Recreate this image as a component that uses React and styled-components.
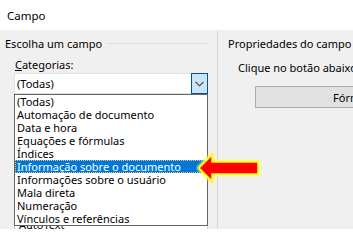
import React from 'react'
import styled, { createGlobalStyle } from 'styled-components'

const categories = [
    '(Todas)',
    'Automação de documento',
    'Data e hora',
    'Equações e fórmulas',
    'Índices',
    'Informação sobre o documento',
    'Informações sobre o usuário',
    'Mala direta',
    'Numeração',
    'Vínculos e referências',
]

// only the rows of the field list that peek out under the open dropdown
const fieldNames = ['AutoText', 'AutoTextList']

const SELECTED = 5

function App() {
    return (
        <>
            <GlobalStyle />
            <Dialog>
                <TitleBar>Campo</TitleBar>
                <Body>
                    <LeftPane>
                        <GroupHeader>
                            <span>Escolha um campo</span>
                            <Rule />
                        </GroupHeader>
                        <Label><u>C</u>ategorias:</Label>
                        <ComboWrap>
                            <Combo>
                                <span>(Todas)</span>
                                <DropButton>
                                    <svg width="9" height="6" viewBox="0 0 9 6">
                                        <path d="M0.5 0.8 L4.5 4.8 L8.5 0.8" fill="none" stroke="#404040" strokeWidth="1.1" />
                                    </svg>
                                </DropButton>
                            </Combo>
                            <DropList>
                                {categories.map((c, i) => (
                                    <Option key={c} $selected={i === SELECTED}>{c}</Option>
                                ))}
                            </DropList>
                        </ComboWrap>
                        <FieldList>
                            {fieldNames.map((f) => (
                                <FieldRow key={f}>{f}</FieldRow>
                            ))}
                        </FieldList>
                    </LeftPane>
                    <Divider />
                    <RightPane>
                        <GroupHeader>
                            <span>Propriedades do campo</span>
                        </GroupHeader>
                        <Hint>Clique no botão abaixo para definir opções avançadas do campo</Hint>
                        <FormulaButton>Fórmula...</FormulaButton>
                    </RightPane>
                </Body>
                <Arrow width="68" height="34" viewBox="0 0 68 34">
                    <defs>
                        <filter id="glow" x="-20%" y="-30%" width="140%" height="160%">
                            <feGaussianBlur stdDeviation="1" />
                        </filter>
                    </defs>
                    <path d="M3 17 L16 4 L16 11 L62 11 L62 23 L16 23 L16 30 Z"
                        fill="none" stroke="#ffff60" strokeWidth="4" filter="url(#glow)" strokeLinejoin="round" />
                    <path d="M3 17 L16 4 L16 11 L62 11 L62 23 L16 23 L16 30 Z"
                        fill="#ff0000" stroke="#ffff00" strokeWidth="1.6" strokeLinejoin="miter" />
                </Arrow>
            </Dialog>
        </>
    )
}

export default App

const GlobalStyle = createGlobalStyle`
    html, body {
        margin: 0;
        padding: 0;
        background: #ffffff;
    }
    body {
        font-family: "Noto Sans", "Open Sans", sans-serif;
        font-size: 11px;
        color: #000000;
    }
`

const Dialog = styled.div`
    position: relative;
    width: 353px;
    height: 229px;
    overflow: hidden;
    display: flex;
    flex-direction: column;
`

const TitleBar = styled.div`
    height: 30px;
    flex-shrink: 0;
    background: #ffffff;
    display: flex;
    align-items: center;
    padding-left: 7px;
    font-size: 11.5px;
`

const Body = styled.div`
    flex: 1;
    display: flex;
    background: #f0f0f0;
    overflow: hidden;
`

const LeftPane = styled.div`
    width: 203px;
    flex-shrink: 0;
    padding: 6px 9px 0 5px;
`

const GroupHeader = styled.div`
    display: flex;
    align-items: center;
    gap: 6px;
    height: 16px;
    line-height: 16px;
    white-space: nowrap;
`

const Rule = styled.div`
    flex: 1;
    height: 1px;
    background: #dcdcdc;
    margin-top: -1px;
`

const Label = styled.div`
    margin: 5px 0 0 10px;
    height: 16px;
    line-height: 16px;
    white-space: nowrap;
`

const ComboWrap = styled.div`
    position: relative;
    margin-left: 9px;
    width: 194px;
`

const Combo = styled.div`
    height: 21px;
    box-sizing: border-box;
    border: 1px solid #e1e1e1;
    border-right: none;
    background: #ffffff;
    display: flex;
    align-items: center;
    justify-content: space-between;
    padding-left: 2px;
`

const DropButton = styled.div`
    width: 17px;
    height: 21px;
    box-sizing: border-box;
    margin-top: -1px;
    margin-bottom: -1px;
    background: #cce4f7;
    border: 1px solid #005499;
    display: flex;
    align-items: center;
    justify-content: center;
`

const DropList = styled.div`
    position: absolute;
    top: 21px;
    left: 0;
    z-index: 2;
    width: 194px;
    box-sizing: border-box;
    background: #ffffff;
    border: 1px solid #646464;
    padding: 0;
`

const Option = styled.div`
    height: 13px;
    line-height: 13px;
    padding-left: 2px;
    box-sizing: border-box;
    white-space: nowrap;
    background: ${(p) => (p.$selected ? '#0078d7' : 'transparent')};
    color: ${(p) => (p.$selected ? '#ffffff' : '#000000')};
    outline: ${(p) => (p.$selected ? '1px dotted #f0c080' : 'none')};
    outline-offset: -1px;
    margin-right: 1px;
`

/* the "Nomes dos campos" list behind the dropdown, scrolled so only its lower rows show */
const FieldList = styled.div`
    margin: 22px 0 0 9px;
    width: 194px;
    height: 140px;
    box-sizing: border-box;
    background: #ffffff;
    border: 1px solid #d0d0d0;
    padding-top: 101px;
`

const FieldRow = styled.div`
    height: 13px;
    line-height: 13px;
    padding-left: 4px;
    white-space: nowrap;
`

const Divider = styled.div`
    width: 1px;
    flex-shrink: 0;
    background: #d5d5d5;
    margin-top: 1px;
`

const RightPane = styled.div`
    flex: 1;
    padding: 6px 0 0 10px;
    white-space: nowrap;
`

const Hint = styled.div`
    margin: 8px 0 0 10px;
    height: 16px;
    line-height: 16px;
`

const FormulaButton = styled.div`
    margin: 10px 0 0 27px;
    width: 208px;
    height: 22px;
    box-sizing: border-box;
    background: #e1e1e1;
    border: 1px solid #adadad;
    display: flex;
    align-items: center;
    justify-content: center;
`

const Arrow = styled.svg`
    position: absolute;
    left: 196px;
    top: 151px;
    z-index: 5;
`
